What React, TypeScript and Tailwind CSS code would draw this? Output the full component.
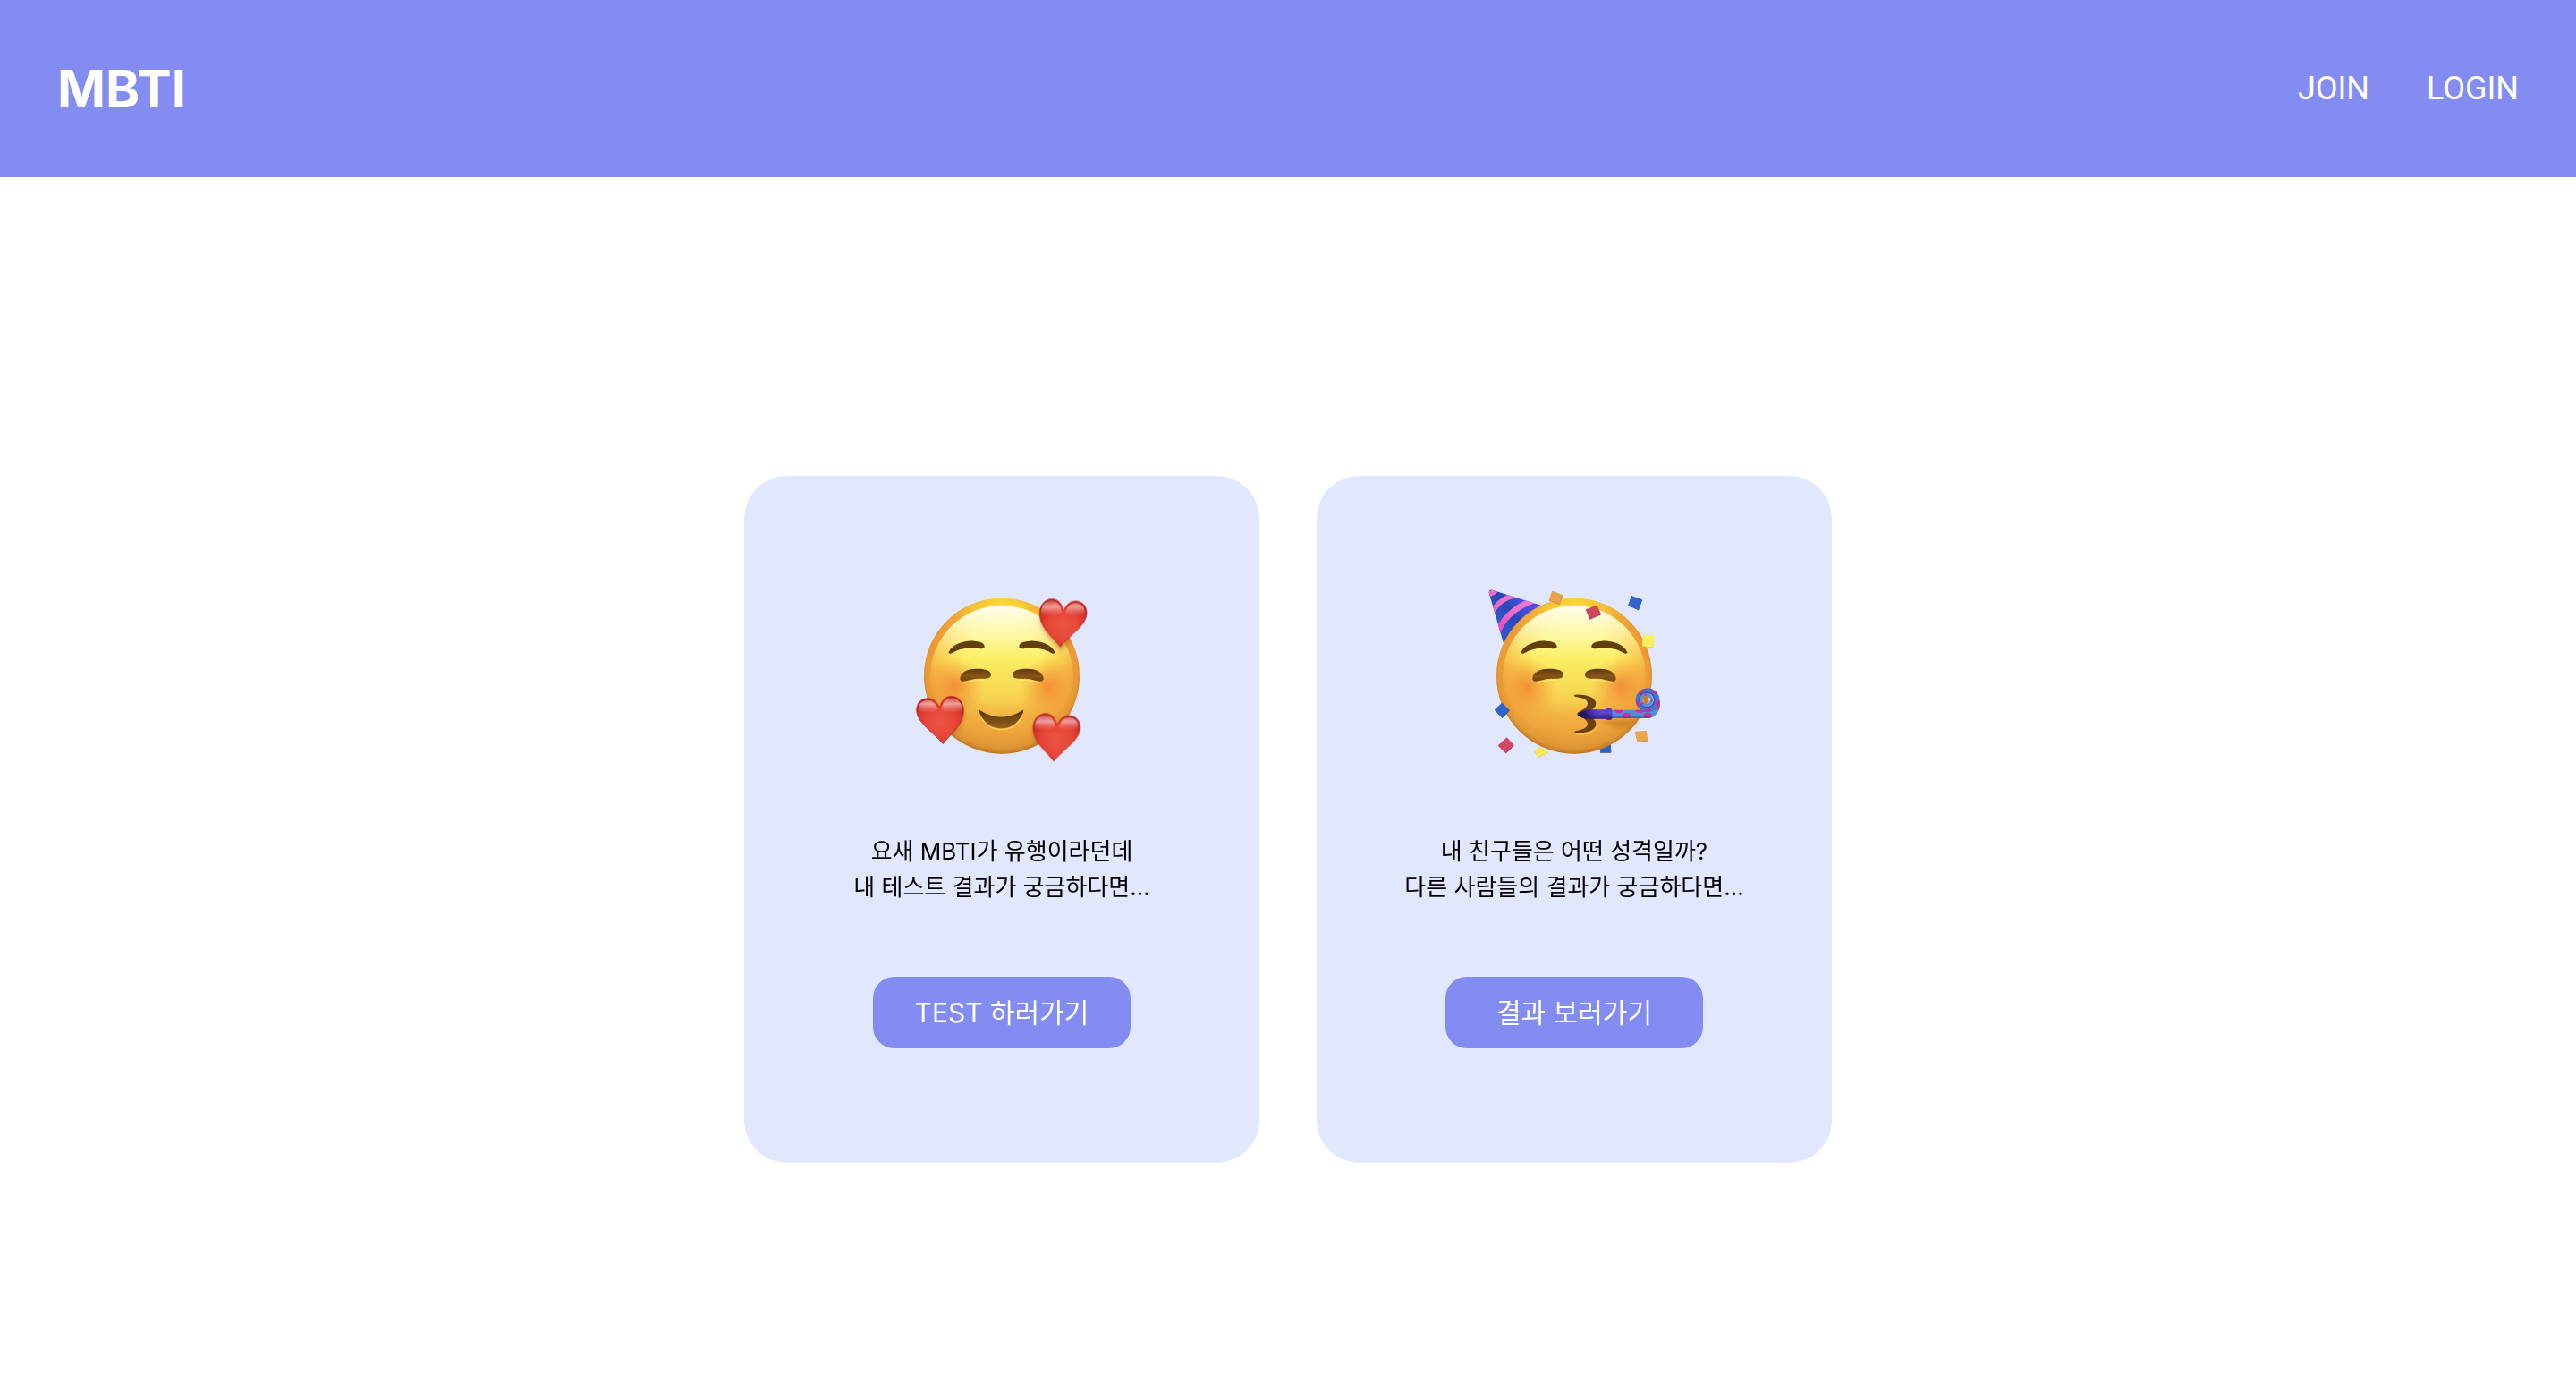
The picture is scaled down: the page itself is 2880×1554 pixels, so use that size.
import { useId, type ReactNode } from "react";

const HEART =
  "M556 249 C530 214 487 185 487 138 C487 108 506 89 528 89 C548 89 562 104 567 128 C576 107 591 95 609 96 C633 97 646 116 645 138 C642 180 592 206 556 249 Z";

function Face({ back, children }: { back?: ReactNode; children: ReactNode }) {
  const id = useId().replace(/[^a-zA-Z0-9]/g, "");
  const url = (name: string) => `url(#${id}${name})`;
  return (
    <svg viewBox="72 60 576 576" className="size-48 overflow-visible" aria-hidden="true">
      <defs>
        <linearGradient id={`${id}base`} x1="0" y1="0" x2="0" y2="1">
          <stop offset="0" stopColor="#f9c63a" />
          <stop offset="0.2" stopColor="#f5a037" />
          <stop offset="0.5" stopColor="#f1a33b" />
          <stop offset="0.8" stopColor="#f0a43b" />
          <stop offset="1" stopColor="#e29a38" />
        </linearGradient>
        <linearGradient id={`${id}shine`} x1="0" y1="112" x2="0" y2="600" gradientUnits="userSpaceOnUse">
          <stop offset="0" stopColor="#fffdf0" />
          <stop offset="0.17" stopColor="#fefab0" />
          <stop offset="0.37" stopColor="#fbee62" />
          <stop offset="0.6" stopColor="#f8d752" />
          <stop offset="0.8" stopColor="#f3b746" />
          <stop offset="1" stopColor="#eca23b" />
        </linearGradient>
        <radialGradient id={`${id}fade`} cx="360" cy="305" r="262" gradientUnits="userSpaceOnUse">
          <stop offset="0" stopColor="#fff" />
          <stop offset="0.5" stopColor="#fff" />
          <stop offset="1" stopColor="#fff" stopOpacity="0" />
        </radialGradient>
        <linearGradient id={`${id}top`} x1="0" y1="112" x2="0" y2="330" gradientUnits="userSpaceOnUse">
          <stop offset="0" stopColor="#fff" />
          <stop offset="0.3" stopColor="#fff" stopOpacity="0.85" />
          <stop offset="1" stopColor="#fff" stopOpacity="0" />
        </linearGradient>
        <mask id={`${id}mask`} maskUnits="userSpaceOnUse" x="90" y="80" width="540" height="540">
          <rect x="90" y="80" width="540" height="540" fill={url("fade")} />
          <rect x="90" y="80" width="540" height="250" fill={url("top")} />
        </mask>
        <radialGradient id={`${id}rim`} cx="360" cy="335" r="275" gradientUnits="userSpaceOnUse">
          <stop offset="0.82" stopColor="#b8701f" stopOpacity="0" />
          <stop offset="0.93" stopColor="#b8701f" stopOpacity="0.2" />
          <stop offset="1" stopColor="#b06a1f" stopOpacity="0.8" />
        </radialGradient>
        <radialGradient id={`${id}glow`} cx="360" cy="95" r="150" gradientUnits="userSpaceOnUse">
          <stop offset="0" stopColor="#ffdf35" />
          <stop offset="1" stopColor="#ffdf35" stopOpacity="0" />
        </radialGradient>
        <radialGradient id={`${id}blush`}>
          <stop offset="0" stopColor="#f28532" stopOpacity="0.85" />
          <stop offset="0.5" stopColor="#f28f35" stopOpacity="0.45" />
          <stop offset="1" stopColor="#f29a38" stopOpacity="0" />
        </radialGradient>
        <linearGradient id={`${id}eye`} x1="0" y1="0" x2="0" y2="1">
          <stop offset="0" stopColor="#5f3a0c" />
          <stop offset="0.6" stopColor="#875519" />
          <stop offset="1" stopColor="#6d4210" />
        </linearGradient>
      </defs>
      {back}
      <circle cx="360" cy="347" r="261" fill={url("base")} />
      <circle cx="360" cy="347" r="261" fill={url("glow")} />
      <circle cx="360" cy="347" r="261" fill={url("rim")} />
      <ellipse cx="360" cy="350" rx="240" ry="239" fill={url("shine")} mask={url("mask")} />
      <circle cx="205" cy="382" r="98" fill={url("blush")} />
      <circle cx="515" cy="382" r="98" fill={url("blush")} />
      <g fill={url("eye")}>
        <g id={`${id}half`}>
          <path d="M182 267 C194 240 236 228 266 230 C291 231 303 239 302 249 C301 259 290 255 266 254 C236 252 212 260 196 269 C188 274 180 273 182 267 Z" fill="#653e0d" />
          <path d="M220 354 C223 330 252 322 279 323 C306 323 324 329 324 343 C323 358 307 357 287 356 C265 356 251 361 239 364 C227 367 219 364 220 354 Z" />
          <path d="M191 276 C213 261 238 255 266 259 M236 370 C252 364 268 360 300 361" fill="none" stroke="#fff176" strokeOpacity="0.7" strokeWidth="4" strokeLinecap="round" />
        </g>
        <use href={`#${id}half`} transform="translate(720 0) scale(-1 1)" />
      </g>
      {children}
    </svg>
  );
}

function Heart({ transform }: { transform?: string }) {
  return (
    <g transform={transform}>
      <path d={HEART} fill="url(#heartFill)" stroke="#c02a24" strokeWidth="2" />
      <path
        d="M492 138 C491 112 506 95 527 95 C545 95 557 108 561 132 C550 146 515 146 492 138 Z M573 134 C580 113 592 102 608 102 C629 103 640 118 639 138 C620 146 590 148 573 134 Z"
        fill="url(#heartShine)"
      />
    </g>
  );
}

function LovingFace() {
  return (
    <Face>
      <defs>
        <radialGradient id="heartFill" cx="566" cy="178" r="88" gradientUnits="userSpaceOnUse">
          <stop offset="0" stopColor="#ea5646" />
          <stop offset="0.55" stopColor="#e74638" />
          <stop offset="0.85" stopColor="#d8362d" />
          <stop offset="1" stopColor="#bd2620" />
        </radialGradient>
        <linearGradient id="heartShine" x1="0" y1="98" x2="0" y2="146" gradientUnits="userSpaceOnUse">
          <stop offset="0" stopColor="#f8c3bf" stopOpacity="0.35" />
          <stop offset="0.35" stopColor="#f8c3bf" stopOpacity="0.75" />
          <stop offset="1" stopColor="#f08a80" stopOpacity="0" />
        </linearGradient>
        <linearGradient id="smileFill" x1="0" y1="0" x2="0" y2="1">
          <stop offset="0" stopColor="#54330a" />
          <stop offset="0.4" stopColor="#6f4511" />
          <stop offset="1" stopColor="#95621f" />
        </linearGradient>
        <filter id="soft" x="-20%" y="-20%" width="140%" height="140%">
          <feGaussianBlur stdDeviation="7" />
        </filter>
        <clipPath id="lovingClip">
          <circle cx="360" cy="347" r="261" />
        </clipPath>
      </defs>
      <path d="M292 488 C308 515 332 527 358 527 C386 527 410 514 426 488" fill="none" stroke="#fbe05a" strokeOpacity="0.7" strokeWidth="5" />
      <path d="M286 461 C330 492 386 492 430 461 C434 462 432 470 428 477 C412 508 388 523 358 523 C328 523 304 508 289 478 C285 470 283 463 286 461 Z" fill="url(#smileFill)" />
      <g clipPath="url(#lovingClip)">
        <g fill="#a8651b" fillOpacity="0.55" filter="url(#soft)">
          <path d={HEART} transform="translate(2 14)" />
          <path d={HEART} transform="translate(-22 394)" />
          <path d={HEART} transform="translate(720 336) scale(-1 1)" />
        </g>
      </g>
      <Heart />
      <Heart transform="translate(-22 384)" />
      <Heart transform="translate(719 326) scale(-1 1)" />
    </Face>
  );
}

function PartyHat() {
  return (
    <>
      <defs>
        <linearGradient id="hatFill" x1="110" y1="160" x2="200" y2="90" gradientUnits="userSpaceOnUse">
          <stop offset="0" stopColor="#2d55c8" />
          <stop offset="0.45" stopColor="#2747b4" />
          <stop offset="0.7" stopColor="#3a50d8" />
          <stop offset="1" stopColor="#5547e6" />
        </linearGradient>
        <linearGradient id="stripeFill" x1="90" y1="200" x2="200" y2="80" gradientUnits="userSpaceOnUse">
          <stop offset="0" stopColor="#ec3fbf" />
          <stop offset="0.6" stopColor="#ec6fc8" />
          <stop offset="1" stopColor="#f07ad0" />
        </linearGradient>
        <clipPath id="hatClip">
          <path d="M74 68 C72 60 80 57 88 60 L248 110 L200 200 L123 238 Z" />
        </clipPath>
      </defs>
      <g clipPath="url(#hatClip)">
        <rect x="70" y="55" width="185" height="190" fill="url(#hatFill)" />
        <g fill="none" stroke="url(#stripeFill)">
          <path d="M70 72 C82 72 92 66 100 56" strokeWidth="18" />
          <path d="M82 140 C94 112 118 88 160 76" strokeWidth="17" />
          <path d="M102 206 C114 164 154 118 222 94" strokeWidth="20" />
        </g>
      </g>
    </>
  );
}

function PartyFace() {
  return (
    <Face
      back={
        <>
          <PartyHat />
          <Confetti points="449,588 482,576 484,603 447,603" fill="#2f60cf" edge="#244ba6" />
        </>
      }
    >
      <defs>
        <linearGradient id="hornFill" x1="0" y1="458" x2="0" y2="494" gradientUnits="userSpaceOnUse">
          <stop offset="0" stopColor="#5a3cc4" />
          <stop offset="0.35" stopColor="#5f45d2" />
          <stop offset="1" stopColor="#2b1a78" />
        </linearGradient>
        <linearGradient id="hornTip" x1="370" y1="0" x2="440" y2="0" gradientUnits="userSpaceOnUse">
          <stop offset="0" stopColor="#150b3d" />
          <stop offset="0.4" stopColor="#1e1150" stopOpacity="0.8" />
          <stop offset="1" stopColor="#2b1a78" stopOpacity="0" />
        </linearGradient>
        <clipPath id="tubeClip">
          <path d="M486 461 H600 C618 461 628 452 630 440 L647 428 C651 464 634 489 603 489 H486 Z" />
        </clipPath>
        <filter id="hornShade" x="-20%" y="-100%" width="140%" height="300%">
          <feGaussianBlur stdDeviation="8" />
        </filter>
      </defs>
      <path d="M440 494 H580 L545 520 H500 Z" fill="#b5651b" fillOpacity="0.5" filter="url(#hornShade)" />
      <path d="M366 543 C400 545 436 534 438 510" fill="none" stroke="#fbd75a" strokeOpacity="0.6" strokeWidth="5" />
      <path d="M363 410 C392 408 431 416 433 438 C434 454 415 464 390 472 C415 481 434 494 433 510 C431 531 398 540 366 538 C358 537 360 532 368 531 C386 528 404 520 405 509 C405 495 390 488 376 482 C368 478 368 471 376 467 C391 460 405 452 405 439 C404 425 386 420 366 417 C358 415 358 411 363 410 Z" fill="#6b420d" />
      <path d="M371 478 C378 467 398 460 418 460 H470 V491 H418 C398 491 378 488 371 478 Z" fill="url(#hornFill)" />
      <path d="M371 478 C378 467 398 460 418 460 H470 V491 H418 C398 491 378 488 371 478 Z" fill="url(#hornTip)" />
      <g clipPath="url(#tubeClip)">
        <rect x="480" y="425" width="172" height="66" fill="#4a90dc" />
        <g fill="#d42a9f">
          <ellipse cx="510" cy="463" rx="14" ry="9" />
          <ellipse cx="536" cy="481" rx="16" ry="11" />
          <ellipse cx="580" cy="463" rx="15" ry="8" />
          <ellipse cx="606" cy="480" rx="14" ry="10" />
          <ellipse cx="642" cy="446" rx="9" ry="15" />
        </g>
        <rect x="480" y="482" width="160" height="8" fill="#1f3f93" fillOpacity="0.4" />
      </g>
      <rect x="466" y="456" width="21" height="38" rx="6" fill="url(#hornFill)" />
      <g fill="none">
        <circle cx="606" cy="428" r="31" stroke="#4478cc" strokeWidth="17" />
        <circle cx="606" cy="428" r="34" stroke="#c72fa0" strokeWidth="9" strokeDasharray="18 25" />
        <circle cx="606" cy="428" r="39" stroke="#3a55b8" strokeOpacity="0.6" strokeWidth="2" />
        <circle cx="604" cy="427" r="25" stroke="#3a4fb0" strokeWidth="5" />
        <circle cx="602" cy="427" r="18" stroke="#5590da" strokeWidth="10" />
        <circle cx="602" cy="427" r="18" stroke="#9a4fb8" strokeWidth="6" strokeDasharray="8 30" />
      </g>
      <path d="M590 416 L608 414 L611 434 L597 440 Z" fill="#c97728" />
      <Confetti points="286,62 322,76 311,106 275,93" fill="#e8a04b" edge="#c98238" />
      <Confetti points="399,124 436,110 450,140 413,156" fill="#cf4560" edge="#a8324c" />
      <Confetti points="552,78 588,91 576,125 541,110" fill="#3263cc" edge="#244ba6" />
      <Confetti points="591,209 628,211 626,251 588,246" fill="#f8f060" edge="#dccb4a" />
      <Confetti points="93,460 118,437 143,462 119,487" fill="#3162cf" edge="#244ba6" />
      <Confetti points="134,553 158,579 131,605 105,580" fill="#d04a68" edge="#a8324c" />
      <Confetti points="226,598 244,584 274,602 240,619" fill="#f7ec56" edge="#d9c63f" />
      <Confetti points="564,534 602,530 606,564 572,568" fill="#eaa552" edge="#c98238" />
    </Face>
  );
}

function Confetti({ points, fill, edge }: { points: string; fill: string; edge: string }) {
  return (
    <g>
      <polygon points={points} fill={edge} transform="translate(0 2)" />
      <polygon points={points} fill={fill} />
    </g>
  );
}

type CardProps = { face: ReactNode; lines: [string, string]; action: string };

function Card({ face, lines, action }: CardProps) {
  return (
    <section className="flex w-xl flex-col items-center gap-20 rounded-[48px] bg-[#e1e7fd] py-32">
      {face}
      <p className="text-center text-[26px] leading-10 text-black">
        {lines[0]}
        <br />
        {lines[1]}
      </p>
      <button type="button" className="h-20 w-72 rounded-3xl bg-[#838cf1] text-[30px] leading-10 text-white">
        {action}
      </button>
    </section>
  );
}

export default function App() {
  return (
    <div className="flex min-h-screen flex-col bg-white font-['Inter','Noto_Sans_CJK_KR',sans-serif]">
      <header className="flex h-[198px] items-center justify-between bg-[#838cf1] px-16 text-white">
        <a href="#" className="text-[58px] font-bold">
          MBTI
        </a>
        <nav className="flex gap-16 font-['Roboto',sans-serif] text-4xl">
          <a href="#join">JOIN</a>
          <a href="#login">LOGIN</a>
        </nav>
      </header>
      <main className="flex flex-1 items-center justify-center gap-16 pt-20">
        <Card
          face={<LovingFace />}
          lines={["요새 MBTI가 유행이라던데", "내 테스트 결과가 궁금하다면..."]}
          action="TEST 하러가기"
        />
        <Card
          face={<PartyFace />}
          lines={["내 친구들은 어떤 성격일까?", "다른 사람들의 결과가 궁금하다면..."]}
          action="결과 보러가기"
        />
      </main>
    </div>
  );
}
